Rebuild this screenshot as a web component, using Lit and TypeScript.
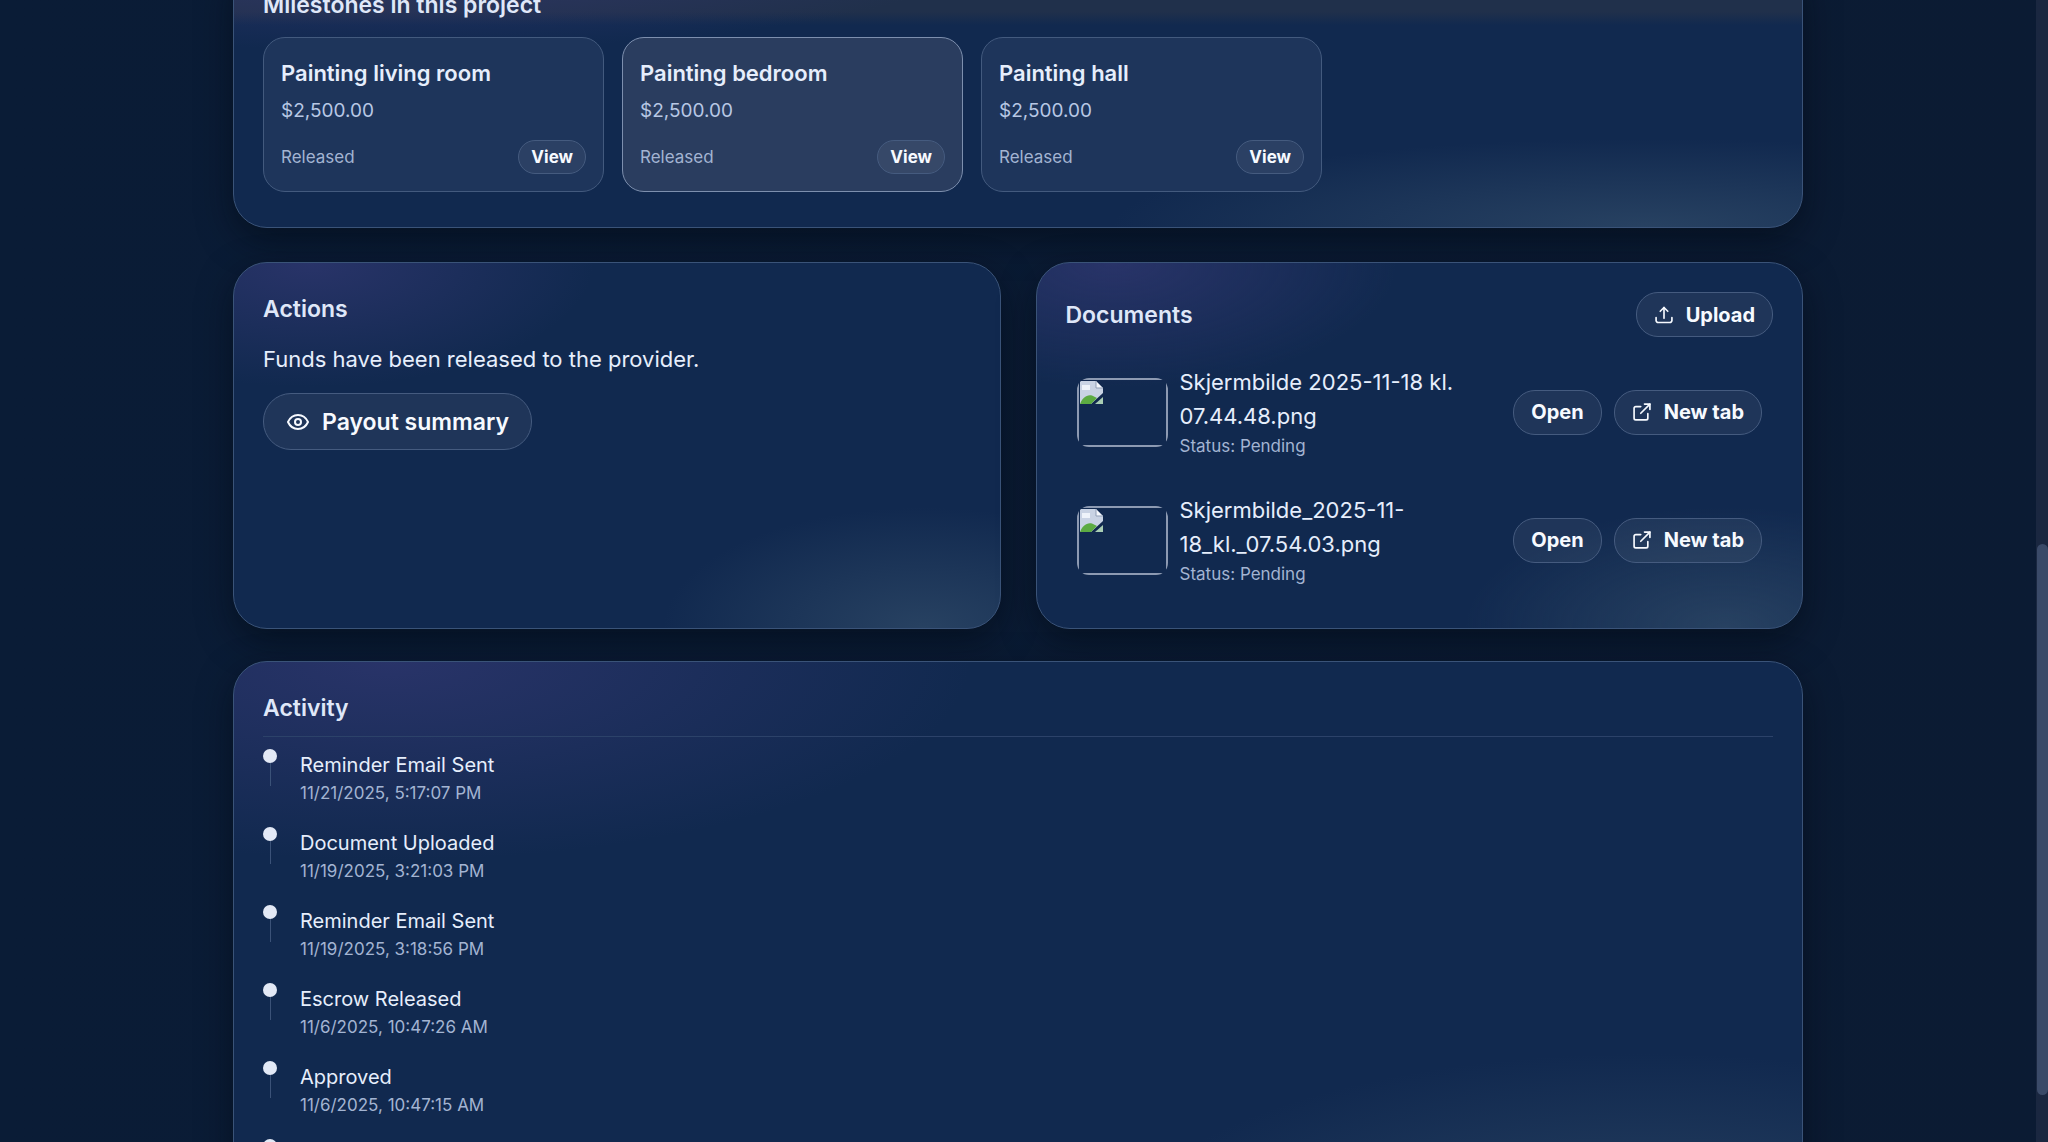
import { LitElement, html, css, svg } from "lit";
import { customElement } from "lit/decorators.js";

interface Milestone {
  title: string;
  amount: string;
  status: string;
  current?: boolean;
}

interface DocumentFile {
  name: string;
  status: string;
}

interface ActivityEvent {
  label: string;
  time: string;
}

const milestones: Milestone[] = [
  { title: "Painting living room", amount: "$2,500.00", status: "Released" },
  { title: "Painting bedroom", amount: "$2,500.00", status: "Released", current: true },
  { title: "Painting hall", amount: "$2,500.00", status: "Released" },
];

const documents: DocumentFile[] = [
  { name: "Skjermbilde 2025-11-18 kl. 07.44.48.png", status: "Pending" },
  { name: "Skjermbilde_2025-11-18_kl._07.54.03.png", status: "Pending" },
];

const events: ActivityEvent[] = [
  { label: "Reminder Email Sent", time: "11/21/2025, 5:17:07 PM" },
  { label: "Document Uploaded", time: "11/19/2025, 3:21:03 PM" },
  { label: "Reminder Email Sent", time: "11/19/2025, 3:18:56 PM" },
  { label: "Escrow Released", time: "11/6/2025, 10:47:26 AM" },
  { label: "Approved", time: "11/6/2025, 10:47:15 AM" },
  { label: "", time: "" },
];

const eyeIcon = svg`
  <path d="M2 12C4 7.6 7.7 5 12 5s8 2.6 10 7c-2 4.4-5.700 7-10 7S4 16.400 2 12Z" />
  <circle cx="12" cy="12" r="3" />`;

const uploadIcon = svg`
  <path d="M12 16V3" />
  <path d="M7.500 7.500L12 3l4.500 4.500" />
  <path d="M2.500 15v3.500A2.500 2.500 0 0 0 5 21h14a2.500 2.500 0 0 0 2.500-2.500V15" />`;

const externalIcon = svg`
  <path d="M15 2.500H21.500V9" />
  <path d="M21.500 2.500L10.500 13.500" />
  <path d="M19 14v5.500a2 2 0 0 1-2 2H4.500a2 2 0 0 1-2-2V7.500a2 2 0 0 1 2-2H10.500" />`;

@customElement("app-root")
export class AppRoot extends LitElement {
  static styles = css`
    :host {
      display: block;
      font-family: Inter, "Liberation Sans", sans-serif;
      color: #e6eefc;
    }
    * {
      box-sizing: border-box;
    }
    .page {
      display: grid;
      grid-template-columns: minmax(0, 1fr) 12px;
      grid-template-rows: minmax(0, 1fr);
      height: 100vh;
      overflow: hidden;
      background: linear-gradient(90deg, #0a1c36, #0b1b33);
    }
    .content {
      display: flex;
      flex-direction: column;
      gap: 32px;
      width: 100%;
      max-width: 1570px;
      margin: -42px auto 0;
    }
    .content > * {
      flex: none;
    }
    .scrollbar {
      position: relative;
      background: #1a2740;
    }
    .thumb {
      position: absolute;
      left: 1px;
      right: 0;
      top: 47.6%;
      height: 48.3%;
      border-radius: 6px;
      background: #3a4a68;
    }
    .card {
      --purple: radial-gradient(37% 34% at 10% 0%, rgba(64, 62, 130, 0.5), rgba(64, 62, 130, 0));
      --teal: radial-gradient(34% 33% at 90% 100%, rgba(62, 90, 116, 0.5), rgba(62, 90, 116, 0));
      padding: 29px;
      border: 1px solid #3a5378;
      border-radius: 34px;
      background: var(--purple), var(--teal), #11294f;
      box-shadow: 0 12px 34px rgba(0, 8, 16, 0.5);
    }
    .heading {
      margin: 0;
      padding-top: 1px;
      font-size: 23px;
      line-height: 32px;
      font-weight: 600;
      color: #dfe7f8;
    }
    .milestone-card {
      padding-bottom: 35px;
      background:
        var(--purple),
        var(--teal),
        linear-gradient(#20304b 53px, rgba(32, 48, 75, 0) 66px),
        #11294f;
    }
    .milestones {
      display: flex;
      gap: 18px;
      margin-top: 16px;
    }
    .milestone {
      display: flex;
      flex-direction: column;
      flex: 0 1 341px;
      padding: 17px;
      border: 1px solid #435a7e;
      border-radius: 22px;
      background: #1e355b;
    }
    .milestone.current {
      border-color: #7d8fae;
      background: #2a3d5f;
    }
    .milestone-title {
      margin: 0;
      font-size: 22px;
      line-height: 36px;
      font-weight: 600;
    }
    .amount {
      font-size: 19px;
      line-height: 40px;
      color: #b7c7e4;
    }
    .milestone-foot {
      display: flex;
      align-items: center;
      justify-content: space-between;
      margin-top: 9px;
    }
    .muted {
      font-size: 17px;
      line-height: 24px;
      color: #a3b4d2;
    }
    .button {
      display: inline-flex;
      align-items: center;
      justify-content: center;
      gap: 12px;
      height: 45px;
      padding: 0 17px;
      border: 1px solid #455b7f;
      border-radius: 22px;
      background: rgba(255, 255, 255, 0.06);
      color: #f7faff;
      font-family: inherit;
      font-size: 20px;
      font-weight: 700;
      text-decoration: none;
      white-space: nowrap;
      cursor: pointer;
    }
    .button.small {
      height: 34px;
      padding: 0 12px;
      border-radius: 17px;
      font-size: 17px;
    }
    .button.large {
      height: 57px;
      padding: 0 22px;
      border-radius: 28px;
      font-size: 23px;
      font-weight: 600;
    }
    .icon {
      width: 20px;
      height: 20px;
      fill: none;
      stroke: currentColor;
      stroke-width: 2;
      stroke-linecap: round;
      stroke-linejoin: round;
    }
    .large .icon {
      width: 24px;
      height: 24px;
    }
    .columns {
      display: grid;
      grid-template-columns: 1fr 1fr;
      gap: 35px;
      margin-top: 2px;
    }
    .message {
      margin: 16px 0;
      font-size: 22px;
      line-height: 36px;
    }
    .documents-head {
      display: flex;
      align-items: center;
      justify-content: space-between;
    }
    .documents {
      display: flex;
      flex-direction: column;
      gap: 10px;
      margin: 16px 0 0;
      padding: 0;
      list-style: none;
    }
    .document {
      display: flex;
      align-items: center;
      gap: 12px;
      padding: 12px 11px;
    }
    .thumbnail {
      flex: none;
      width: 91px;
      height: 69px;
      border-radius: 12px;
      overflow: hidden;
    }
    .missing {
      height: 100%;
      padding: 1px;
      border: 2px solid #8d9ab2;
    }
    .missing svg {
      display: block;
      width: 23px;
      height: 23px;
    }
    .document-info {
      flex: 1;
      min-width: 0;
    }
    .document-info .muted {
      line-height: 26px;
    }
    .document-name {
      font-size: 22px;
      line-height: 34px;
      overflow-wrap: anywhere;
    }
    .document-actions {
      display: flex;
      gap: 12px;
      margin-left: 40px;
    }
    .activity .heading {
      padding-bottom: 12px;
      border-bottom: 1px solid #2c4269;
    }
    .timeline {
      margin: 0;
      padding: 12px 0 0;
      list-style: none;
    }
    .event {
      display: flex;
      gap: 23px;
      height: 78px;
    }
    .marker {
      display: flex;
      flex-direction: column;
      align-items: center;
      width: 14px;
    }
    .dot {
      width: 14px;
      height: 14px;
      border-radius: 50%;
      background: #e3e9f6;
    }
    .stem {
      width: 1px;
      height: 23px;
      background: #3b5278;
    }
    .event-label {
      font-size: 20px;
      line-height: 32px;
    }
  `;

  private icon(shape: unknown) {
    return html`<svg class="icon" viewBox="0 0 24 24" aria-hidden="true">${shape}</svg>`;
  }

  private renderMilestone(item: Milestone) {
    return html`
      <article class="milestone ${item.current ? "current" : ""}">
        <h3 class="milestone-title">${item.title}</h3>
        <div class="amount">${item.amount}</div>
        <div class="milestone-foot">
          <span class="muted">${item.status}</span>
          <button class="button small" type="button">View</button>
        </div>
      </article>
    `;
  }

  private renderDocument(file: DocumentFile) {
    return html`
      <li class="document">
        <div class="thumbnail">
          <div class="missing">
            <svg viewBox="0 0 23 23" aria-hidden="true">
              <path d="M0 0H16L23 7V12L11 23H0Z" fill="#c9d3e4" />
              <path d="M2 4H10V9H2Z" fill="#eef3fa" />
              <path d="M16 0V7H23Z" fill="#f4f7fc" stroke="#8f9db5" stroke-width="1" />
              <path d="M0 23C2 17 7 13 12 14.500L17 17L11 23Z" fill="#5cab42" />
              <path d="M23 16V23H15Z" fill="#a9cdb4" />
            </svg>
          </div>
        </div>
        <div class="document-info">
          <div class="document-name">${file.name}</div>
          <div class="muted">Status: ${file.status}</div>
        </div>
        <div class="document-actions">
          <button class="button" type="button">Open</button>
          <a class="button" href="#">${this.icon(externalIcon)}New tab</a>
        </div>
      </li>
    `;
  }

  private renderEvent(event: ActivityEvent) {
    return html`
      <li class="event">
        <div class="marker">
          <div class="dot"></div>
          <div class="stem"></div>
        </div>
        <div>
          <div class="event-label">${event.label}</div>
          <div class="muted">${event.time}</div>
        </div>
      </li>
    `;
  }

  render() {
    return html`
      <div class="page">
        <main class="content">
          <section class="card milestone-card">
            <h2 class="heading">Milestones in this project</h2>
            <div class="milestones">${milestones.map((m) => this.renderMilestone(m))}</div>
          </section>
          <div class="columns">
            <section class="card">
              <h2 class="heading">Actions</h2>
              <p class="message">Funds have been released to the provider.</p>
              <button class="button large" type="button">
                ${this.icon(eyeIcon)}Payout summary
              </button>
            </section>
            <section class="card">
              <div class="documents-head">
                <h2 class="heading">Documents</h2>
                <button class="button" type="button">${this.icon(uploadIcon)}Upload</button>
              </div>
              <ul class="documents">
                ${documents.map((d) => this.renderDocument(d))}
              </ul>
            </section>
          </div>
          <section class="card activity">
            <h2 class="heading">Activity</h2>
            <ol class="timeline">
              ${events.map((e) => this.renderEvent(e))}
            </ol>
          </section>
        </main>
        <div class="scrollbar"><div class="thumb"></div></div>
      </div>
    `;
  }
}
